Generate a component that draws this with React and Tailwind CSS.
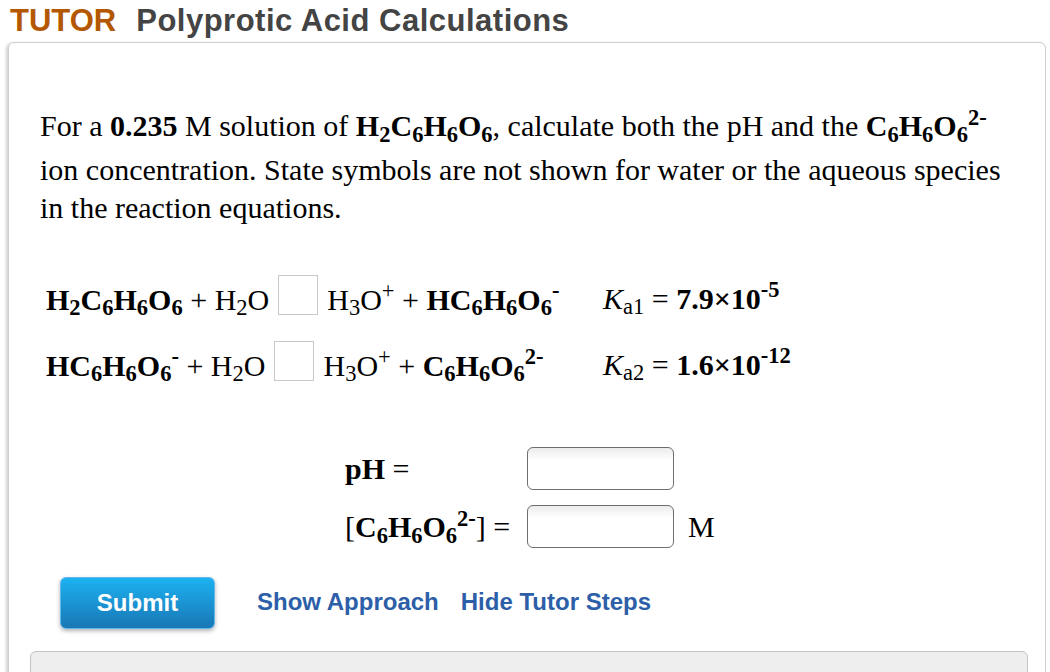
import React from 'react';

// Small helpers for chemical formulas
const Sub = ({ children }) => <sub className="text-[0.75em] relative -bottom-[0.25em] leading-none">{children}</sub>;
const Sup = ({ children }) => <sup className="text-[0.75em] relative -top-[0.5em] leading-none">{children}</sup>;

const serif = "font-['Liberation_Serif','Times_New_Roman',serif]";
const sans = "font-['Liberation_Sans',Arial,sans-serif]";

function Acid() {
  return (
    <b>
      H<Sub>2</Sub>C<Sub>6</Sub>H<Sub>6</Sub>O<Sub>6</Sub>
    </b>
  );
}

function HydrogenIon() {
  return (
    <b>
      HC<Sub>6</Sub>H<Sub>6</Sub>O<Sub>6</Sub>
      <Sup>-</Sup>
    </b>
  );
}

function Dianion() {
  return (
    <b>
      C<Sub>6</Sub>H<Sub>6</Sub>O<Sub>6</Sub>
      <Sup>2-</Sup>
    </b>
  );
}

function Water() {
  return (
    <span>
      H<Sub>2</Sub>O
    </span>
  );
}

function Hydronium() {
  return (
    <span>
      H<Sub>3</Sub>O<Sup>+</Sup>
    </span>
  );
}

function ArrowSlot() {
  return <span className="inline-block w-10 h-10 border border-[#c8c8c8] bg-white mx-[9px] align-[-5px]" />;
}

function Equation({ left, right, k }) {
  return (
    <div className="flex items-center h-[42px]">
      <div className="w-[557px] shrink-0 whitespace-nowrap">
        {left} + <Water />
        <ArrowSlot />
        <Hydronium /> + {right}
      </div>
      <div className="whitespace-nowrap">{k}</div>
    </div>
  );
}

function Ka({ n, value, exp }) {
  return (
    <span>
      <i>K</i>
      <Sub>a{n}</Sub> ={' '}
      <b>
        {value}×10<Sup>{exp}</Sup>
      </b>
    </span>
  );
}

function AnswerBox() {
  return (
    <div className="w-[147px] h-[43px] rounded-md border border-[#6e6e6e] bg-gradient-to-b from-[#ececec] to-white to-[30%]" />
  );
}

export default function App() {
  return (
    <div className="w-[1050px] h-[672px] overflow-hidden bg-white">
      {/* Header */}
      <h1 className={`${sans} font-bold text-[31px] leading-none px-[10px] pt-[5px] h-[42px] whitespace-nowrap`}>
        <span className="text-[#b35800]">TUTOR</span>
        <span className="text-[#444444] ml-[20px] tracking-[0.5px]">Polyprotic Acid Calculations</span>
      </h1>

      {/* Question card */}
      <div className="ml-2 mr-1 h-[640px] border border-[#cfcfcf] rounded-md shadow-[-2px_1px_3px_rgba(0,0,0,0.18)] bg-white">
        <div className={`${serif} text-[30px] text-black pl-[31px] pr-4`}>
          <div className="pt-[63px] whitespace-nowrap">
            <div className="h-[45px] leading-[40px]">
              For a <b>0.235</b> M solution of <Acid />, calculate both the pH and the <Dianion />
            </div>
            <div className="leading-[38px]">
              ion concentration. State symbols are not shown for water or the aqueous species
            </div>
            <div className="leading-[38px]">in the reaction equations.</div>
          </div>

          {/* Reaction equations */}
          <div className="mt-[50px] pl-[6px] flex flex-col gap-[24px]">
            <Equation left={<Acid />} right={<HydrogenIon />} k={<Ka n="1" value="7.9" exp="-5" />} />
            <Equation left={<HydrogenIon />} right={<Dianion />} k={<Ka n="2" value="1.6" exp="-12" />} />
          </div>

          {/* Answer inputs */}
          <div className="mt-[62px] ml-[305px] grid grid-cols-[182px_147px_auto] grid-rows-[43px_43px] gap-y-[15px] items-center">
            <div>
              <b>pH</b> =
            </div>
            <AnswerBox />
            <div />
            <div className="whitespace-nowrap">
              [<Dianion />] =
            </div>
            <AnswerBox />
            <div className="pl-[14px]">M</div>
          </div>
        </div>

        {/* Actions */}
        <div className={`${sans} flex items-center mt-[29px] pl-[51px]`}>
          <button className="w-[155px] h-[52px] rounded-md border border-[#62b8ea] bg-gradient-to-b from-[#1cb2f1] to-[#1977b6] text-white font-bold text-[24px] shadow-[0_2px_4px_rgba(0,0,0,0.3)]">
            Submit
          </button>
          <a className="ml-[42px] text-[#2d5ea8] font-bold text-[24px] -translate-y-px">Show Approach</a>
          <a className="ml-[22px] text-[#2d5ea8] font-bold text-[24px] -translate-y-px">Hide Tutor Steps</a>
        </div>

        {/* Steps panel */}
        <div className="ml-[21px] mr-[17px] mt-[22px] h-[80px] rounded-md border border-[#c4c4c4] bg-[#eeeeee]" />
      </div>
    </div>
  );
}
